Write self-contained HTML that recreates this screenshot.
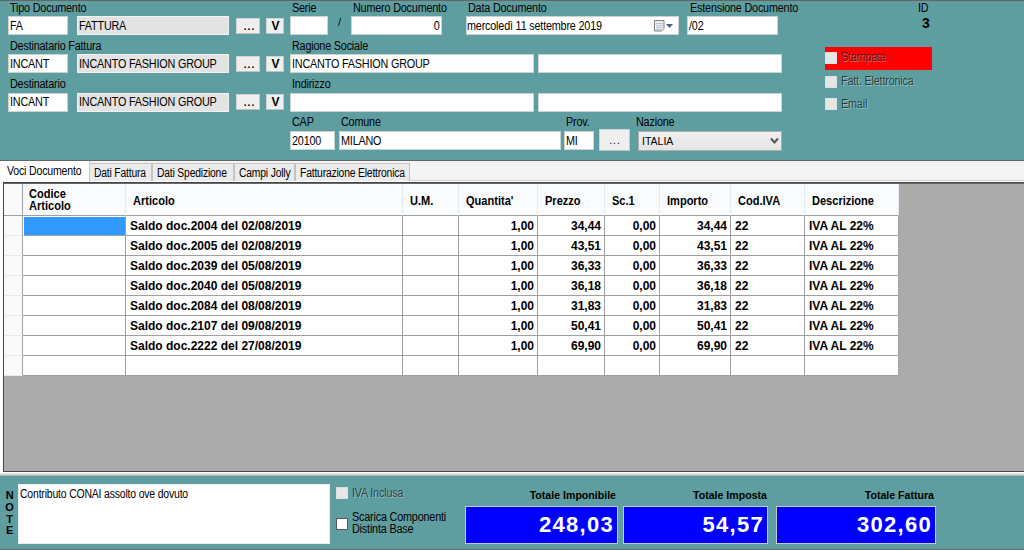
<!DOCTYPE html>
<html><head><meta charset="utf-8">
<style>
*{box-sizing:border-box;margin:0;padding:0}
html,body{width:1024px;height:550px;overflow:hidden;background:#5f9ea0;font-family:"Liberation Sans",sans-serif;font-size:10.5px;color:#000}
.a{position:absolute}
.l{position:absolute;line-height:12px;white-space:nowrap;font-size:11px;letter-spacing:-0.3px}
.tx{display:inline-block;font-size:12px;letter-spacing:-0.2px;transform:scaleX(0.9);transform-origin:0 50%;vertical-align:top}
.txr{transform-origin:100% 50%}
.lab{font-size:12px;letter-spacing:-0.2px;transform:scaleX(0.9);transform-origin:0 0}
.tb{position:absolute;background:#fff;border:1px solid #c9d3d3;height:19px;line-height:19px;padding-left:1px;font-size:11px;letter-spacing:-0.4px;white-space:nowrap;overflow:hidden}
.ro{background:#e3e3e3;border-color:#f2f2f2}
.btn{position:absolute;background:#efefef;border:1px solid #d4d4d4;border-bottom-color:#c0c0c0;border-right-color:#c8c8c8;text-align:center;white-space:nowrap}
.cb{position:absolute;width:12px;height:12px;background:#e6e6e6;border:1px solid #d9dede}
.gc{height:20px;background:#fff;border-right:1px solid #a0a0a0;border-bottom:1px solid #a0a0a0;font-weight:bold;font-size:12px;line-height:19px;white-space:nowrap}
.gc .dl{position:absolute;left:4px;top:1px}
.gc .dr{position:absolute;right:3px;top:1px}
.sel{background:#3399ff;border-left:1px solid #fff;border-top:1px solid #fff}
.rh{background:#fafafa;border-right:1px solid #a0a0a0;border-bottom:1px solid #e3ebf5}
.gh{background:#fafbfd}
.ghc{background:#fafbfd;border-right:1px solid #e3ebf5;border-bottom:1px solid #a0a0a0}
.ghc0{border-right-color:#a0a0a0;background:#fafafa}
.hb{font-weight:bold;font-size:12px;letter-spacing:0;transform:scaleX(0.92);transform-origin:0 0}
.tab{position:absolute;top:163px;height:18px;background:#ebebeb;border:1px solid #c4c4c4;border-bottom:none;line-height:18px;padding-left:4px;white-space:nowrap;font-size:10.6px;letter-spacing:-0.3px}
.dis{color:rgba(20,30,30,.78);text-shadow:1px 1px 0 rgba(255,255,255,.35)}
</style></head><body>
<!-- top dark line -->
<div class="a" style="left:0;top:0;width:1024px;height:1px;background:#646464"></div>

<!-- ROW 1 -->
<div class="l lab" style="left:10px;top:2px">Tipo Documento</div>
<div class="tb" style="left:8px;top:16px;width:60px"><span class="tx">FA</span></div>
<div class="tb ro" style="left:77px;top:16px;width:152px"><span class="tx">FATTURA</span></div>
<div class="btn" style="left:236px;top:18px;width:24px;height:16px;line-height:16px;font-size:10px;letter-spacing:1px;padding-left:3px;font-weight:bold">...</div>
<div class="btn" style="left:266px;padding-left:1px;top:18px;width:18px;height:16px;line-height:15px;font-weight:bold;font-size:12px">V</div>

<div class="l lab" style="left:292px;top:2px">Serie</div>
<div class="tb" style="left:290px;top:16px;width:38px"></div>
<div class="l" style="left:338px;top:16px">/</div>
<div class="l lab" style="left:353px;top:2px">Numero Documento</div>
<div class="tb" style="left:351px;top:16px;width:91px;text-align:right;padding-right:2px"><span class="tx txr">0</span></div>
<div class="l lab" style="left:468px;top:2px">Data Documento</div>
<div class="tb" style="left:466px;top:16px;width:213px;padding-left:0"><span class="tx">mercoledì 11 settembre 2019</span></div>
<svg class="a" style="left:653px;top:19px" width="22" height="14" viewBox="0 0 22 14">
<path d="M1.5 1.5h9.5v8l-2.5 2.5h-7z" fill="#e9edf5" stroke="#857c7c"/>
<path d="M3 4.5h6.5M3 6.5h6.5M3 8.5h6.5M3 10.5h5" stroke="#bcc1cf" stroke-width="1"/>
<path d="M13 5h7l-3.5 4z" fill="#4a6285"/>
</svg>
<div class="l lab" style="left:690px;top:2px">Estensione Documento</div>
<div class="tb" style="left:687px;top:16px;width:91px"><span class="tx">/02</span></div>
<div class="l lab" style="left:918px;top:2px">ID</div>
<div class="l" style="left:922px;top:17px;font-weight:bold;font-size:14px;letter-spacing:0">3</div>

<!-- ROW 2 -->
<div class="l lab" style="left:10px;top:40px">Destinatario Fattura</div>
<div class="tb" style="left:8px;top:54px;width:60px"><span class="tx">INCANT</span></div>
<div class="tb ro" style="left:77px;top:54px;width:152px"><span class="tx">INCANTO FASHION GROUP</span></div>
<div class="btn" style="left:236px;top:56px;width:24px;height:16px;line-height:16px;font-size:10px;letter-spacing:1px;padding-left:3px;font-weight:bold">...</div>
<div class="btn" style="left:266px;padding-left:1px;top:56px;width:18px;height:16px;line-height:15px;font-weight:bold;font-size:12px">V</div>
<div class="l lab" style="left:292px;top:40px">Ragione Sociale</div>
<div class="tb" style="left:290px;top:54px;width:244px"><span class="tx">INCANTO FASHION GROUP</span></div>
<div class="tb" style="left:538px;top:54px;width:244px"></div>

<!-- ROW 3 -->
<div class="l lab" style="left:10px;top:78px">Destinatario</div>
<div class="tb" style="left:8px;top:93px;line-height:17px;width:60px"><span class="tx">INCANT</span></div>
<div class="tb ro" style="left:77px;top:93px;line-height:17px;width:152px"><span class="tx">INCANTO FASHION GROUP</span></div>
<div class="btn" style="left:236px;top:94px;width:24px;height:16px;line-height:16px;font-size:10px;letter-spacing:1px;padding-left:3px;font-weight:bold">...</div>
<div class="btn" style="left:266px;padding-left:1px;top:94px;width:18px;height:16px;line-height:15px;font-weight:bold;font-size:12px">V</div>
<div class="l lab" style="left:292px;top:78px">Indirizzo</div>
<div class="tb" style="left:290px;top:93px;line-height:17px;width:244px"></div>
<div class="tb" style="left:538px;top:93px;line-height:17px;width:244px"></div>

<!-- ROW 4 -->
<div class="l lab" style="left:292px;top:116px">CAP</div>
<div class="tb" style="left:290px;top:131px;width:45px"><span class="tx">20100</span></div>
<div class="l lab" style="left:341px;top:116px">Comune</div>
<div class="tb" style="left:339px;top:131px;width:222px"><span class="tx">MILANO</span></div>
<div class="l lab" style="left:566px;top:116px">Prov.</div>
<div class="tb" style="left:564px;top:131px;width:30px"><span class="tx">MI</span></div>
<div class="btn" style="left:599px;top:129px;width:31px;height:22px;line-height:22px;font-size:10px;letter-spacing:1px;padding-left:1px">...</div>
<div class="l lab" style="left:636px;top:116px">Nazione</div>
<div class="a" style="left:638px;top:131px;width:144px;height:20px;border:1px solid #adadad;background:linear-gradient(#f0f0f0,#e5e5e5);line-height:18px;padding-left:3px">ITALIA<svg class="a" style="left:131px;top:5px" width="9" height="8" viewBox="0 0 9 8"><path d="M1 1.5l3.5 4l3.5-4" fill="none" stroke="#585858" stroke-width="2.1"/></svg></div>

<!-- checkboxes right -->
<div class="a" style="left:825px;top:47px;width:107px;height:23px;background:#ff0000"></div>
<div class="cb" style="left:825px;top:52px"></div>
<div class="l dis" style="left:841px;top:51px"><span class="tx">Stampata</span></div>
<div class="cb" style="left:825px;top:76px"></div>
<div class="l dis" style="left:841px;top:75px"><span class="tx">Fatt. Elettronica</span></div>
<div class="cb" style="left:825px;top:98px"></div>
<div class="l dis" style="left:841px;top:98px"><span class="tx">Email</span></div>

<!-- TAB CONTROL -->
<div class="a" style="left:0;top:160px;width:1024px;height:316px;background:#fff"></div>
<div class="a" style="left:0;top:160px;width:1024px;height:1px;background:#646464"></div>
<div class="a" style="left:0;top:161px;width:1024px;height:20px;background:#f4f4f4"></div>
<div class="a" style="left:0;top:180px;width:1024px;height:1px;background:#d0d0d0"></div>
<div class="tab" style="left:89px;width:63px"><span class="tx" style="transform:scaleX(0.86)">Dati Fattura</span></div>
<div class="tab" style="left:152px;width:82px"><span class="tx" style="transform:scaleX(0.86)">Dati Spedizione</span></div>
<div class="tab" style="left:234px;width:61px"><span class="tx" style="transform:scaleX(0.86)">Campi Jolly</span></div>
<div class="tab" style="left:295px;width:115px"><span class="tx" style="transform:scaleX(0.86)">Fatturazione Elettronica</span></div>
<div class="a" style="left:0;top:161px;width:90px;height:21px;background:#fff;border-right:1px solid #c8c8c8"></div>
<div class="l" style="left:7px;top:165px"><span class="tx" style="transform:scaleX(0.88)">Voci Documento</span></div>

<!-- GRID -->
<div class="a" style="left:3px;top:182px;width:1021px;height:290px;background:#ababab;border-top:1px solid #444;border-left:1px solid #444;border-bottom:1px solid #444"></div>
<div class="a gh" style="left:4px;top:183px;width:895px;height:33px"></div>
<div class="a ghc ghc0" style="left:4px;top:183px;width:19px;height:33px"></div>
<div class="a ghc" style="left:23px;top:183px;width:103px;height:33px"></div>
<div class="l hb" style="left:29px;top:188px;line-height:12.3px">Codice<br>Articolo</div>
<div class="a ghc" style="left:126px;top:183px;width:277px;height:33px"></div>
<div class="l hb" style="left:133px;top:195px">Articolo</div>
<div class="a ghc" style="left:403px;top:183px;width:56px;height:33px"></div>
<div class="l hb" style="left:410px;top:195px">U.M.</div>
<div class="a ghc" style="left:459px;top:183px;width:79px;height:33px"></div>
<div class="l hb" style="left:466px;top:195px">Quantita'</div>
<div class="a ghc" style="left:538px;top:183px;width:67px;height:33px"></div>
<div class="l hb" style="left:545px;top:195px">Prezzo</div>
<div class="a ghc" style="left:605px;top:183px;width:55px;height:33px"></div>
<div class="l hb" style="left:612px;top:195px">Sc.1</div>
<div class="a ghc" style="left:660px;top:183px;width:71px;height:33px"></div>
<div class="l hb" style="left:667px;top:195px">Importo</div>
<div class="a ghc" style="left:731px;top:183px;width:74px;height:33px"></div>
<div class="l hb" style="left:738px;top:195px">Cod.IVA</div>
<div class="a ghc" style="left:805px;top:183px;width:94px;height:33px"></div>
<div class="l hb" style="left:812px;top:195px">Descrizione</div>
<div class="a rh" style="left:4px;top:216px;width:19px;height:20px"></div>
<div class="a gc sel" style="left:23px;top:216px;width:103px"></div>
<div class="a gc" style="left:126px;top:216px;width:277px"><span class="dl">Saldo doc.2004 del 02/08/2019</span></div>
<div class="a gc" style="left:403px;top:216px;width:56px"></div>
<div class="a gc" style="left:459px;top:216px;width:79px"><span class="dr">1,00</span></div>
<div class="a gc" style="left:538px;top:216px;width:67px"><span class="dr">34,44</span></div>
<div class="a gc" style="left:605px;top:216px;width:55px"><span class="dr">0,00</span></div>
<div class="a gc" style="left:660px;top:216px;width:71px"><span class="dr">34,44</span></div>
<div class="a gc" style="left:731px;top:216px;width:74px"><span class="dl">22</span></div>
<div class="a gc" style="left:805px;top:216px;width:94px"><span class="dl">IVA AL 22%</span></div>
<div class="a rh" style="left:4px;top:236px;width:19px;height:20px"></div>
<div class="a gc" style="left:23px;top:236px;width:103px"></div>
<div class="a gc" style="left:126px;top:236px;width:277px"><span class="dl">Saldo doc.2005 del 02/08/2019</span></div>
<div class="a gc" style="left:403px;top:236px;width:56px"></div>
<div class="a gc" style="left:459px;top:236px;width:79px"><span class="dr">1,00</span></div>
<div class="a gc" style="left:538px;top:236px;width:67px"><span class="dr">43,51</span></div>
<div class="a gc" style="left:605px;top:236px;width:55px"><span class="dr">0,00</span></div>
<div class="a gc" style="left:660px;top:236px;width:71px"><span class="dr">43,51</span></div>
<div class="a gc" style="left:731px;top:236px;width:74px"><span class="dl">22</span></div>
<div class="a gc" style="left:805px;top:236px;width:94px"><span class="dl">IVA AL 22%</span></div>
<div class="a rh" style="left:4px;top:256px;width:19px;height:20px"></div>
<div class="a gc" style="left:23px;top:256px;width:103px"></div>
<div class="a gc" style="left:126px;top:256px;width:277px"><span class="dl">Saldo doc.2039 del 05/08/2019</span></div>
<div class="a gc" style="left:403px;top:256px;width:56px"></div>
<div class="a gc" style="left:459px;top:256px;width:79px"><span class="dr">1,00</span></div>
<div class="a gc" style="left:538px;top:256px;width:67px"><span class="dr">36,33</span></div>
<div class="a gc" style="left:605px;top:256px;width:55px"><span class="dr">0,00</span></div>
<div class="a gc" style="left:660px;top:256px;width:71px"><span class="dr">36,33</span></div>
<div class="a gc" style="left:731px;top:256px;width:74px"><span class="dl">22</span></div>
<div class="a gc" style="left:805px;top:256px;width:94px"><span class="dl">IVA AL 22%</span></div>
<div class="a rh" style="left:4px;top:276px;width:19px;height:20px"></div>
<div class="a gc" style="left:23px;top:276px;width:103px"></div>
<div class="a gc" style="left:126px;top:276px;width:277px"><span class="dl">Saldo doc.2040 del 05/08/2019</span></div>
<div class="a gc" style="left:403px;top:276px;width:56px"></div>
<div class="a gc" style="left:459px;top:276px;width:79px"><span class="dr">1,00</span></div>
<div class="a gc" style="left:538px;top:276px;width:67px"><span class="dr">36,18</span></div>
<div class="a gc" style="left:605px;top:276px;width:55px"><span class="dr">0,00</span></div>
<div class="a gc" style="left:660px;top:276px;width:71px"><span class="dr">36,18</span></div>
<div class="a gc" style="left:731px;top:276px;width:74px"><span class="dl">22</span></div>
<div class="a gc" style="left:805px;top:276px;width:94px"><span class="dl">IVA AL 22%</span></div>
<div class="a rh" style="left:4px;top:296px;width:19px;height:20px"></div>
<div class="a gc" style="left:23px;top:296px;width:103px"></div>
<div class="a gc" style="left:126px;top:296px;width:277px"><span class="dl">Saldo doc.2084 del 08/08/2019</span></div>
<div class="a gc" style="left:403px;top:296px;width:56px"></div>
<div class="a gc" style="left:459px;top:296px;width:79px"><span class="dr">1,00</span></div>
<div class="a gc" style="left:538px;top:296px;width:67px"><span class="dr">31,83</span></div>
<div class="a gc" style="left:605px;top:296px;width:55px"><span class="dr">0,00</span></div>
<div class="a gc" style="left:660px;top:296px;width:71px"><span class="dr">31,83</span></div>
<div class="a gc" style="left:731px;top:296px;width:74px"><span class="dl">22</span></div>
<div class="a gc" style="left:805px;top:296px;width:94px"><span class="dl">IVA AL 22%</span></div>
<div class="a rh" style="left:4px;top:316px;width:19px;height:20px"></div>
<div class="a gc" style="left:23px;top:316px;width:103px"></div>
<div class="a gc" style="left:126px;top:316px;width:277px"><span class="dl">Saldo doc.2107 del 09/08/2019</span></div>
<div class="a gc" style="left:403px;top:316px;width:56px"></div>
<div class="a gc" style="left:459px;top:316px;width:79px"><span class="dr">1,00</span></div>
<div class="a gc" style="left:538px;top:316px;width:67px"><span class="dr">50,41</span></div>
<div class="a gc" style="left:605px;top:316px;width:55px"><span class="dr">0,00</span></div>
<div class="a gc" style="left:660px;top:316px;width:71px"><span class="dr">50,41</span></div>
<div class="a gc" style="left:731px;top:316px;width:74px"><span class="dl">22</span></div>
<div class="a gc" style="left:805px;top:316px;width:94px"><span class="dl">IVA AL 22%</span></div>
<div class="a rh" style="left:4px;top:336px;width:19px;height:20px"></div>
<div class="a gc" style="left:23px;top:336px;width:103px"></div>
<div class="a gc" style="left:126px;top:336px;width:277px"><span class="dl">Saldo doc.2222 del 27/08/2019</span></div>
<div class="a gc" style="left:403px;top:336px;width:56px"></div>
<div class="a gc" style="left:459px;top:336px;width:79px"><span class="dr">1,00</span></div>
<div class="a gc" style="left:538px;top:336px;width:67px"><span class="dr">69,90</span></div>
<div class="a gc" style="left:605px;top:336px;width:55px"><span class="dr">0,00</span></div>
<div class="a gc" style="left:660px;top:336px;width:71px"><span class="dr">69,90</span></div>
<div class="a gc" style="left:731px;top:336px;width:74px"><span class="dl">22</span></div>
<div class="a gc" style="left:805px;top:336px;width:94px"><span class="dl">IVA AL 22%</span></div>
<div class="a rh" style="left:4px;top:356px;width:19px;height:20px"></div>
<div class="a gc" style="left:23px;top:356px;width:103px"></div>
<div class="a gc" style="left:126px;top:356px;width:277px"></div>
<div class="a gc" style="left:403px;top:356px;width:56px"></div>
<div class="a gc" style="left:459px;top:356px;width:79px"></div>
<div class="a gc" style="left:538px;top:356px;width:67px"></div>
<div class="a gc" style="left:605px;top:356px;width:55px"></div>
<div class="a gc" style="left:660px;top:356px;width:71px"></div>
<div class="a gc" style="left:731px;top:356px;width:74px"></div>
<div class="a gc" style="left:805px;top:356px;width:94px"></div>
<div class="a" style="left:4px;top:183px;width:1020px;height:1px;background:#6a6a6a"></div>

<!-- NOTES / TOTALS PANEL -->
<div class="a" style="left:0;top:473px;width:1024px;height:3px;background:linear-gradient(#ececec,#d0d0d0 66%,#b4b4b4 66%)"></div>
<div class="a" style="left:0;top:549px;width:1024px;height:1px;background:#646464"></div>
<div class="tb" style="left:18px;top:484px;width:312px;height:60px;line-height:18px;padding-left:1px;border-color:#e8eeee"><span class="tx" style="transform:scaleX(0.87)">Contributo CONAI assolto ove dovuto</span></div>

<div class="l" style="left:4px;top:490px;width:11px;text-align:center;font-weight:bold;font-size:11px;line-height:11.8px">N<br>O<br>T<br>E</div>
<div class="cb" style="left:336px;top:487px"></div>
<div class="l dis" style="left:352px;top:487px"><span class="tx">IVA Inclusa</span></div>
<div class="cb" style="left:336px;top:518px;background:#fff;border-color:#555"></div>
<div class="l" style="left:352px;top:512px;line-height:11.5px"><span class="tx">Scarica Componenti<br>Distinta Base</span></div>

<div class="l" style="left:465px;top:489px;width:151px;text-align:right;font-weight:bold;font-size:10.6px;letter-spacing:0">Totale Imponibile</div>
<div class="a" style="left:465px;top:506px;width:153px;height:38px;background:#0000ff;border:1px solid #c8c8c8;color:#fff;font-weight:bold;font-size:22px;letter-spacing:1.3px;text-align:right;padding-right:3px;line-height:36px">248,03</div>
<div class="l" style="left:623px;top:489px;width:144px;text-align:right;font-weight:bold;font-size:10.6px;letter-spacing:0">Totale Imposta</div>
<div class="a" style="left:623px;top:506px;width:145px;height:38px;background:#0000ff;border:1px solid #c8c8c8;color:#fff;font-weight:bold;font-size:22px;letter-spacing:1.3px;text-align:right;padding-right:3px;line-height:36px">54,57</div>
<div class="l" style="left:776px;top:489px;width:158px;text-align:right;font-weight:bold;font-size:10.6px;letter-spacing:0">Totale Fattura</div>
<div class="a" style="left:776px;top:506px;width:160px;height:38px;background:#0000ff;border:1px solid #c8c8c8;color:#fff;font-weight:bold;font-size:22px;letter-spacing:1.3px;text-align:right;padding-right:3px;line-height:36px">302,60</div>

</body></html>
